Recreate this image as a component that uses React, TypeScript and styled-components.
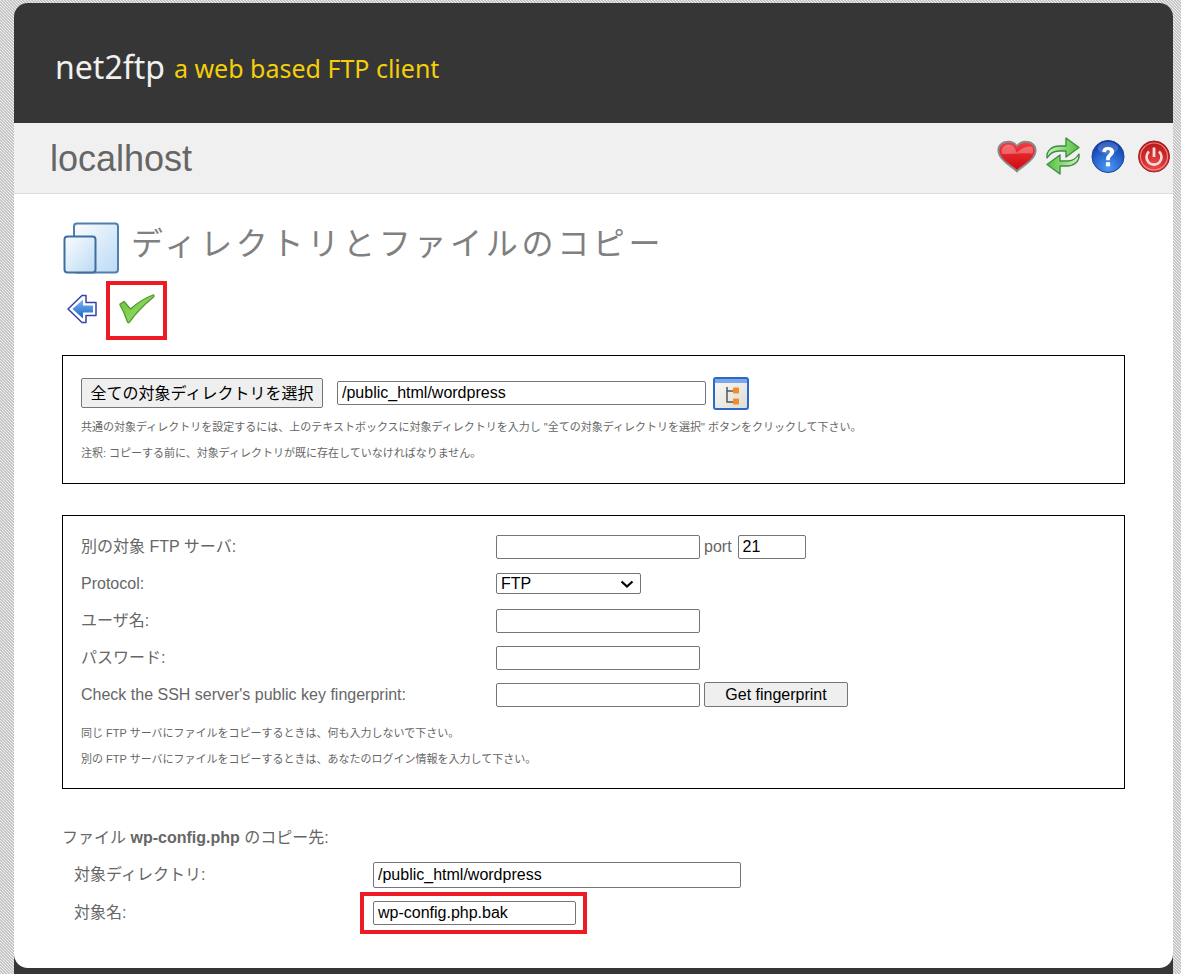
import styled, { createGlobalStyle } from "styled-components"

const GlobalStyle = createGlobalStyle`
    html, body {
        margin: 0;
        height: 100%;
        overflow: hidden;
    }
    body {
        font-family: "Liberation Sans", "Noto Sans CJK JP", sans-serif;
        background: repeating-linear-gradient(
            45deg,
            #c6c6c6 0,
            #c6c6c6 1px,
            #f0f0f0 1px,
            #f0f0f0 2.1213px
        );
    }
`

const chevron =
    "data:image/svg+xml,%3Csvg xmlns='http://www.w3.org/2000/svg' width='14' height='8' viewBox='0 0 14 8'%3E%3Cpath d='M1.500 1.500L7 6.500L12.500 1.500' fill='none' stroke='%23000' stroke-width='2.200'/%3E%3C/svg%3E"

function HeartIcon() {
    return (
        <svg width="40" height="35" viewBox="0 0 42 36">
            <defs>
                <linearGradient id="heartFill" x1="0" y1="0" x2="0" y2="1">
                    <stop offset="0" stopColor="#f23a40" />
                    <stop offset="1" stopColor="#d00810" />
                </linearGradient>
            </defs>
            <path d="M21 35C15 29 1 22 .5 12C.2 5 6 1.500 12 1.500C16 1.500 19.500 3.500 21 6C22.500 3.500 26 1.500 30 1.500C36 1.500 41.800 5 41.500 12C41 22 27 29 21 35Z" fill="#444" opacity=".6" />
            <path d="M21 32C15 26.500 3 21 2.500 12C2.300 6.500 7.500 3.500 12 3.500C16 3.500 19.500 6 21 8.500C22.500 6 26 3.500 30 3.500C34.500 3.500 39.700 6.500 39.500 12C39 21 27 26.500 21 32Z" fill="url(#heartFill)" />
            <path d="M5 15C4 9 8 5.500 12.500 5.500C17 5.500 19 9 20.500 14C26 9 32 6 37 8C38.500 11 38 14 37 15C27 14 15 16 5 15Z" fill="#fff" opacity=".28" />
        </svg>
    )
}

function RefreshIcon() {
    return (
        <svg width="36" height="40" viewBox="0 0 36 40">
            <defs>
                <linearGradient id="refreshFill" x1="0" y1="0" x2="1" y2="0">
                    <stop offset="0" stopColor="#d4f2c4" />
                    <stop offset="1" stopColor="#4fc038" />
                </linearGradient>
                <linearGradient id="refreshFillBack" x1="0" y1="0" x2="1" y2="0">
                    <stop offset="0" stopColor="#4fc038" />
                    <stop offset="1" stopColor="#d4f2c4" />
                </linearGradient>
            </defs>
            <path d="M2 22C1 14 8 10 14 10H21V2L34 11.500L21 21V15H14C9 15 5 17 2 22Z" fill="url(#refreshFill)" stroke="#3f8f3f" strokeWidth="1.400" strokeLinejoin="round" />
            <path d="M34 18C35 26 28 30 22 30H15V38L2 28.500L15 19V25H22C27 25 31 23 34 18Z" fill="url(#refreshFillBack)" stroke="#3f8f3f" strokeWidth="1.400" strokeLinejoin="round" />
        </svg>
    )
}

function HelpIcon() {
    return (
        <svg width="34" height="35" viewBox="0 0 36 36">
            <defs>
                <radialGradient id="helpFill" cx=".5" cy=".85" r=".85">
                    <stop offset="0" stopColor="#4a9af5" />
                    <stop offset="1" stopColor="#0a36a8" />
                </radialGradient>
            </defs>
            <circle cx="18" cy="18" r="17" fill="url(#helpFill)" stroke="#1a3f94" />
            <ellipse cx="18" cy="9" rx="11" ry="6.500" fill="#fff" opacity=".18" />
            <path d="M12 13C12 9.500 15 8 18 8C22 8 24.500 10 24.500 13C24.500 17 20 17.500 20 21V22H16V20.500C16 16 20 15.500 20 13C20 11.500 19 11 18 11C16.500 11 16 12 16 13.500Z" fill="#fff" />
            <rect x="15.800" y="24" width="4.400" height="4.400" fill="#fff" />
        </svg>
    )
}

function PowerIcon() {
    return (
        <svg width="32" height="33" viewBox="0 0 32 33">
            <defs>
                <radialGradient id="powerFill" cx=".5" cy=".8" r=".8">
                    <stop offset="0" stopColor="#ee4a4a" />
                    <stop offset="1" stopColor="#b81212" />
                </radialGradient>
            </defs>
            <circle cx="16" cy="16.500" r="15.500" fill="url(#powerFill)" stroke="#a32020" />
            <circle cx="16" cy="16.500" r="13.500" fill="none" stroke="#f4b0b0" strokeWidth="1.200" opacity=".7" />
            <path d="M11 11.500A7.500 7.500 0 1 0 21 11.500" fill="none" stroke="#fbdcdc" strokeWidth="2.600" />
            <path d="M16 7.500V17" stroke="#fbdcdc" strokeWidth="2.800" />
        </svg>
    )
}

function CopyIcon() {
    return (
        <svg width="58" height="54" viewBox="0 0 58 54">
            <defs>
                <linearGradient id="copyFill" x1="0" y1="0" x2="1" y2="1">
                    <stop offset="0" stopColor="#fafdff" />
                    <stop offset="1" stopColor="#bcdaf4" />
                </linearGradient>
            </defs>
            <rect x="11" y="1.500" width="44" height="49" rx="3" fill="url(#copyFill)" stroke="#4f7fae" strokeWidth="2" />
            <rect x="1.500" y="14.500" width="31" height="36" rx="3" fill="url(#copyFill)" stroke="#3e6f9f" strokeWidth="2" />
        </svg>
    )
}

function BackIcon() {
    return (
        <svg width="30" height="30" viewBox="0 0 30 30">
            <defs>
                <linearGradient id="backFill" x1="0" y1="0" x2="0" y2="1">
                    <stop offset="0" stopColor="#7fb8f0" />
                    <stop offset="1" stopColor="#1562c8" />
                </linearGradient>
            </defs>
            <path d="M1 15L15 1.500H19V8.500H29V21.500H19V28.500H15Z" fill="#fff" stroke="#3a3fa8" strokeWidth="1.500" strokeLinejoin="round" />
            <path d="M5.500 15L16 5.500V11.500H26V18.500H16V24.500Z" fill="url(#backFill)" />
        </svg>
    )
}

function CheckIcon() {
    return (
        <svg width="36" height="32" viewBox="0 0 36 32">
            <defs>
                <linearGradient id="checkFill" x1="0" y1="0" x2="1" y2="1">
                    <stop offset="0" stopColor="#66c438" />
                    <stop offset="1" stopColor="#a6e06c" />
                </linearGradient>
            </defs>
            <path d="M1 11L5 8.500L11.500 16C18 10 26 5 34 2C35 2 35.500 3 34.500 4C26 11 17 20 10.500 29C10 30 9 30 8.500 29C6.500 23 4 17 1 12Z" fill="url(#checkFill)" stroke="#4f9a34" strokeWidth="1.300" strokeLinejoin="round" />
        </svg>
    )
}

function TreeIcon() {
    return (
        <svg width="36" height="33" viewBox="0 0 36 33">
            <defs>
                <linearGradient id="treeFill" x1="0" y1="0" x2="1" y2="1">
                    <stop offset="0" stopColor="#fbfbf6" />
                    <stop offset="1" stopColor="#dcdcd4" />
                </linearGradient>
            </defs>
            <rect x="1" y="1" width="34" height="31" rx="2" fill="url(#treeFill)" stroke="#2c68c8" strokeWidth="2" />
            <rect x="2" y="2" width="32" height="4" fill="#7aa8e8" />
            <path d="M14 10V25H21M14 14H21" fill="none" stroke="#555" strokeWidth="1.500" />
            <rect x="20" y="10.500" width="6" height="6" rx="1" fill="#f08a2c" />
            <rect x="20" y="21.500" width="6" height="6" rx="1" fill="#f08a2c" />
        </svg>
    )
}

function App() {
    return (
        <>
            <GlobalStyle />
            <Page>
                <Header>
                    <Logo>net2ftp</Logo>
                    <Tagline>a web based FTP client</Tagline>
                </Header>
                <Panel>
                    <SubHeader>
                        <HostName>localhost</HostName>
                        <IconBar>
                            <HeartIcon />
                            <RefreshIcon />
                            <HelpIcon />
                            <PowerIcon />
                        </IconBar>
                    </SubHeader>
                    <Content>
                        <TitleRow>
                            <CopyIcon />
                            <Title>ディレクトリとファイルのコピー</Title>
                        </TitleRow>
                        <ActionRow>
                            <BackIcon />
                            <CheckHighlight>
                                <CheckIcon />
                            </CheckHighlight>
                        </ActionRow>

                        <TargetBox>
                            <TargetRow>
                                <SelectAllButton>全ての対象ディレクトリを選択</SelectAllButton>
                                <TextInput $width={369} defaultValue="/public_html/wordpress" />
                                <TreeIcon />
                            </TargetRow>
                            <HelpText>共通の対象ディレクトリを設定するには、上のテキストボックスに対象ディレクトリを入力し "全ての対象ディレクトリを選択" ボタンをクリックして下さい。</HelpText>
                            <HelpText>注釈: コピーする前に、対象ディレクトリが既に存在していなければなりません。</HelpText>
                        </TargetBox>

                        <ServerBox>
                            <ServerGrid>
                                <Label $cjk>別の対象 FTP サーバ:</Label>
                                <Field>
                                    <TextInput $width={204} />
                                    <PortLabel>port</PortLabel>
                                    <TextInput $width={68} defaultValue="21" />
                                </Field>
                                <Label>Protocol:</Label>
                                <Field>
                                    <Select defaultValue="FTP">
                                        <option>FTP</option>
                                        <option>FTP with SSL</option>
                                        <option>SFTP</option>
                                    </Select>
                                </Field>
                                <Label $cjk>ユーザ名:</Label>
                                <Field>
                                    <TextInput $width={204} />
                                </Field>
                                <Label $cjk>パスワード:</Label>
                                <Field>
                                    <TextInput $width={204} />
                                </Field>
                                <Label>Check the SSH server's public key fingerprint:</Label>
                                <Field>
                                    <TextInput $width={204} />
                                    <FingerprintButton>Get fingerprint</FingerprintButton>
                                </Field>
                            </ServerGrid>
                            <ServerHelp>
                                <HelpText>同じ FTP サーバにファイルをコピーするときは、何も入力しないで下さい。</HelpText>
                                <HelpText>別の FTP サーバにファイルをコピーするときは、あなたのログイン情報を入力して下さい。</HelpText>
                            </ServerHelp>
                        </ServerBox>

                        <FileTitle>
                            ファイル <b>wp-config.php</b> のコピー先:
                        </FileTitle>
                        <FileRow>
                            <FileLabel>対象ディレクトリ:</FileLabel>
                            <FileInput $width={368} defaultValue="/public_html/wordpress" />
                        </FileRow>
                        <FileRow>
                            <FileLabel>対象名:</FileLabel>
                            <NameHighlight>
                                <TextInput $width={203} defaultValue="wp-config.php.bak" />
                            </NameHighlight>
                        </FileRow>
                    </Content>
                </Panel>
            </Page>
        </>
    )
}

export default App

const Page = styled.div`
    width: 1159px;
    height: 971px;
    margin: 3px 0 0 14px;
    background: #363636;
    border-radius: 14px 14px 0 0;
    display: flex;
    flex-direction: column;
    overflow: hidden;
`

const Header = styled.div`
    height: 120px;
    flex: none;
    box-sizing: border-box;
    padding: 7px 0 0 41px;
    display: flex;
    align-items: center;
    gap: 9px;
    font-family: "Noto Sans", sans-serif;
`

const Logo = styled.span`
    font-size: 32px;
    color: #f0f0f0;
`

const Tagline = styled.span`
    font-size: 25px;
    color: #f3cf0b;
    margin-top: 2px;
`

const Panel = styled.div`
    height: 845px;
    flex: none;
    background: #fff;
    border-radius: 0 0 14px 14px;
    overflow: hidden;
`

const SubHeader = styled.div`
    height: 71px;
    box-sizing: border-box;
    background: #f0f0f0;
    border-bottom: 1px solid #dcdcdc;
    padding: 2px 3px 0 36px;
    display: flex;
    align-items: center;
    justify-content: space-between;
`

const HostName = styled.div`
    font-size: 36px;
    color: #666;
`

const IconBar = styled.div`
    display: flex;
    align-items: center;
    gap: 8px;
    margin-top: -6px;

    svg:nth-child(3) {
        margin-left: 2px;
    }

    svg:last-child {
        margin-left: 5px;
    }
`

const Content = styled.div`
    padding: 28px 48px 0;
`

const TitleRow = styled.div`
    display: flex;
    align-items: center;
    gap: 10px;
    height: 54px;
    margin-left: 1px;
`

const Title = styled.h1`
    margin: 0;
    font-size: 32px;
    font-weight: 400;
    letter-spacing: 3.7px;
    color: #808080;
    margin-top: -16px;
    white-space: nowrap;
`

const ActionRow = styled.div`
    display: flex;
    align-items: center;
    height: 60px;
    margin: 4px 0 15px 5px;
    gap: 9px;

    > svg {
        margin-top: -2px;
    }
`

const CheckHighlight = styled.div`
    width: 61px;
    height: 59px;
    box-sizing: border-box;
    border: 4px solid #ed1c24;
    padding-bottom: 2px;
    display: flex;
    align-items: center;
    justify-content: center;
`

const Box = styled.div`
    border: 1px solid #000;
    box-sizing: border-box;
    padding: 0 18px;
`

const TargetBox = styled(Box)`
    height: 129px;
    padding-top: 20px;
`

const TargetRow = styled.div`
    display: flex;
    align-items: center;
    margin-bottom: 4px;

    > svg {
        margin-top: 1px;
    }
`

const TextInput = styled.input<{ $width: number }>`
    width: ${(p) => p.$width}px;
    height: 24px;
    box-sizing: border-box;
    padding: 1px 4px;
    border: 1px solid #767676;
    border-radius: 2px;
    background: #fff;
    color: #000;
    font-family: "Liberation Sans", "Noto Sans CJK JP", sans-serif;
    font-size: 16px;
`

const FileInput = styled(TextInput)`
    height: 26px;
`

const SelectAllButton = styled.button`
    width: 242px;
    height: 30px;
    margin-right: 14px;
    padding: 0 0 3px;
    border: 1px solid #767676;
    border-radius: 2px;
    background: #efefef;
    color: #000;
    font-family: "Liberation Sans", "Noto Sans CJK JP", sans-serif;
    font-size: 16px;

    & + input {
        margin-right: 7px;
    }
`

const HelpText = styled.p`
    margin: 0;
    height: 26px;
    line-height: 26px;
    font-size: 11px;
    color: #666;
    white-space: nowrap;
`

const ServerBox = styled(Box)`
    height: 274px;
    margin-top: 31px;
    padding-top: 18px;
`

const ServerGrid = styled.div`
    display: grid;
    grid-template-columns: 415px 1fr;
    grid-auto-rows: 25px;
    row-gap: 12px;
    align-items: center;
`

const Label = styled.div<{ $cjk?: boolean }>`
    font-size: 16px;
    color: #666;
    white-space: nowrap;
    margin-bottom: ${(p) => (p.$cjk ? 3 : 0)}px;
`

const Field = styled.div`
    display: flex;
    align-items: center;
`

const PortLabel = styled.span`
    font-size: 16px;
    color: #666;
    margin: 0 6px 0 4px;
`

const Select = styled.select`
    width: 145px;
    height: 21px;
    box-sizing: border-box;
    padding-left: 4px;
    border: 1px solid #767676;
    border-radius: 2px;
    appearance: none;
    background: #fff url("${chevron}") no-repeat right 6px center;
    color: #000;
    font-family: "Liberation Sans", "Noto Sans CJK JP", sans-serif;
    font-size: 16px;
`

const FingerprintButton = styled.button`
    width: 144px;
    height: 25px;
    margin-left: 4px;
    padding: 0;
    border: 1px solid #767676;
    border-radius: 2px;
    background: #efefef;
    color: #000;
    font-family: "Liberation Sans", "Noto Sans CJK JP", sans-serif;
    font-size: 16px;
`

const ServerHelp = styled.div`
    margin-top: 13px;
`

const FileTitle = styled.div`
    margin: 39px 0 8px;
    font-size: 16px;
    line-height: 20px;
    color: #666;
`

const FileRow = styled.div`
    display: flex;
    align-items: center;
    height: 38px;
    padding-left: 12px;
`

const FileLabel = styled.div`
    width: 299px;
    font-size: 16px;
    color: #666;
    margin-bottom: 4px;
`

const NameHighlight = styled.div`
    width: 227px;
    height: 42px;
    box-sizing: border-box;
    margin-left: -13px;
    padding-left: 9px;
    border: 4px solid #ed1c24;
    display: flex;
    align-items: center;
`
